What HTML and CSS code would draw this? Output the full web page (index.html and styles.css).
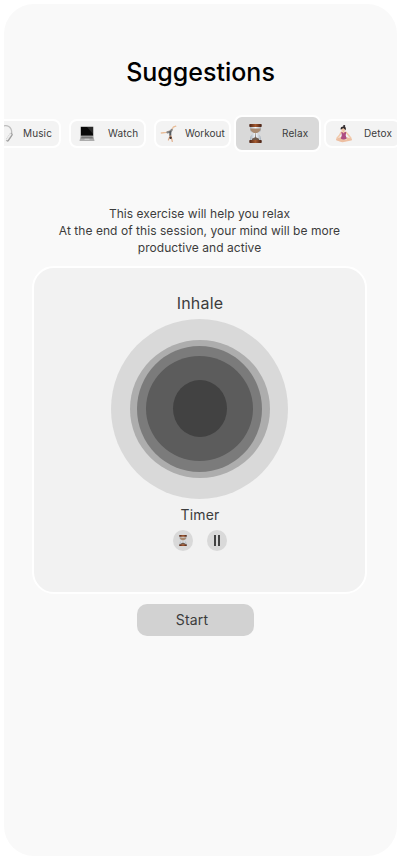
FILE: index.html
```html
<!DOCTYPE html>
<html lang="en">
<head>
<meta charset="utf-8">
<title>Suggestions</title>
<link rel="stylesheet" href="styles.css">
</head>
<body>
<svg width="0" height="0" class="defs">
  <defs>
    <linearGradient id="wood"><stop offset="0" stop-color="#4c2416"/><stop offset=".5" stop-color="#a4592f"/><stop offset="1" stop-color="#452015"/></linearGradient>
    <linearGradient id="glass"><stop offset="0" stop-color="#a9b3bd"/><stop offset=".5" stop-color="#f4f8fc"/><stop offset="1" stop-color="#a9b3bd"/></linearGradient>
    <symbol id="hourglass" viewBox="0 0 13 19">
      <path d="M1 2.500h11v3c0 2.400-2 3-3.600 4 1.600 1 3.600 2.300 3.600 5v2H1v-2c0-2.700 2-4 3.600-5C3 8.500 1 7.900 1 5.500z" fill="url(#glass)"/>
      <path d="M1.300 4.500h10.400c.2 2.500-1.900 3.400-3.600 4.500H4.900C3.200 7.900 1.100 7 1.300 4.500z" fill="#a98a70"/>
      <path d="M3 14.800 6.100 13.300 6.300 9h.4l.2 4.300 3.100 1.500v1.700H3z" fill="#6d5b4e"/>
      <rect x=".3" y="0" width="12.400" height="2.900" rx=".7" fill="url(#wood)"/>
      <rect x=".3" y="16" width="12.400" height="3" rx=".7" fill="url(#wood)"/>
    </symbol>
  </defs>
</svg>
<main class="screen">
  <h1 class="title">Suggestions</h1>
  <nav class="chips">
    <div class="chip chip-music">
      <svg class="icon-music" width="12" height="20" viewBox="0 0 12 20" fill="none">
        <path d="M-5 6C-2 .5 4.500 .2 7 5c1.300 3 .7 6-1.200 9" stroke="#bdbdbd" stroke-width="1.300"/>
        <path d="M7.200 10.500 3.500 16" stroke="#9e9e9e" stroke-width="3.200" stroke-linecap="round"/>
        <path d="M6.500 10.400 3 15.500" stroke="#ececec" stroke-width="2" stroke-linecap="round"/>
      </svg>
      <span>Music</span>
    </div>
    <div class="chip chip-watch">
      <svg width="16" height="16" viewBox="0 0 16 16">
        <rect x="1.500" y=".5" width="13" height="9.800" rx=".6" fill="#8c8c8c"/>
        <rect x="2" y="1" width="12" height="8.500" fill="#080808"/>
        <path d="M8 1h6v7z" fill="#292929"/>
        <path d="M1.500 10.200h13l1 4.800H.5z" fill="#acacac"/>
        <path d="M2.500 10.400h11l.5 2H2z" fill="#777"/>
        <path d="M5.700 12.800h4.600l.3 1.300H5.400z" fill="#c8c8c8"/>
      </svg>
      <span>Watch</span>
    </div>
    <div class="chip chip-workout">
      <svg width="18" height="18" viewBox="0 0 18 18" fill="none" stroke-linecap="round" stroke-linejoin="round">
        <path d="M1.300 8l5.200-.7 3-1.300M12 4.500l1.200-2.300L15.800 1.200" stroke="#e8bd99" stroke-width="1.300"/>
        <path d="M7.500 7.400l3-.9 1.200-1.600" stroke="#858585" stroke-width="2.200"/>
        <path d="M10.300 7v3.500" stroke="#555b60" stroke-width="2"/>
        <path d="M10 11 8.400 15M11 11l1.300 5.500" stroke="#e1ad89" stroke-width="1.200"/>
        <circle cx="10.600" cy="12.800" r="1.200" fill="#3d302e"/>
      </svg>
      <span>Workout</span>
    </div>
    <div class="chip chip-relax">
      <svg width="13" height="19"><use href="#hourglass" width="13" height="19"/></svg>
      <span>Relax</span>
    </div>
    <div class="chip chip-detox">
      <svg width="18" height="18" viewBox="0 0 18 18" fill="none" stroke-linecap="round" stroke-linejoin="round">
        <path d="M6.500 7 4.600 10.200 2 13.300M10.800 7l2.600 3 2.500 3.300" stroke="#f1c9aa" stroke-width="1.500"/>
        <path d="M6.500 12.800 2 14.600l5.500 1.600 8.500-1.600-4.800-1.700-6.200 2.800" stroke="#edbfa2" stroke-width="2"/>
        <path d="M6.300 7h4.900l-.5 3.200.9 3.400c-1.800 1.300-4.400 1.200-5.800 0l1-3.400z" fill="#ad4c82"/>
        <path d="M8.500 4.500v2.800" stroke="#eebf9e" stroke-width="2"/>
        <circle cx="8.300" cy="3.900" r="2.200" fill="#f0c7a7"/>
        <path d="M5.800 4.700C5.100 2.500 6.500 1.500 8.700 1.600c2 0 2.700 1.500 1.900 3.900-.7-1.400-1.700-1.900-2.300-2.500-.6 1-1.800.7-2.500 1.700z" fill="#302a2d"/>
        <circle cx="9.200" cy="1.100" r="1.100" fill="#302a2d"/>
      </svg>
      <span>Detox</span>
    </div>
  </nav>
  <p class="intro">This exercise will help you relax<br>At the end of this session, your mind will be more<br>productive and active</p>
  <section class="card">
    <h2 class="phase">Inhale</h2>
    <svg class="rings" width="177" height="180" viewBox="0 0 177 180">
      <ellipse cx="88.500" cy="90" rx="88.500" ry="90" fill="#d9d9d9"/>
      <ellipse cx="89" cy="90" rx="70" ry="69" fill="#adadad"/>
      <ellipse cx="88.500" cy="90" rx="62.500" ry="63" fill="#7b7b7b"/>
      <ellipse cx="88.500" cy="89.500" rx="53.500" ry="52.500" fill="#5c5c5c"/>
      <ellipse cx="89" cy="89.500" rx="27" ry="28.500" fill="#424242"/>
    </svg>
    <h3 class="timer">Timer</h3>
    <div class="controls">
      <div class="control"><svg width="8" height="11" viewBox="0 0 13 19" preserveAspectRatio="none"><use href="#hourglass" width="13" height="19"/></svg></div>
      <div class="control"><svg width="6" height="11" viewBox="0 0 6 11"><path d="M0 0h2v11H0zM4 0h2v11H4z" fill="#424242"/></svg></div>
    </div>
  </section>
  <button class="start">Start</button>
</main>
</body>
</html>
```
FILE: styles.css
```css
* { box-sizing: border-box; }
body {
  margin: 0;
  padding: 4px;
  background: #fff;
  color: #3c3c3c;
  font-family: Inter, sans-serif;
}
.defs { display: block; }
.screen {
  width: 393px;
  height: 852px;
  border-radius: 30px;
  background: #f9f9f9;
  overflow: hidden;
  display: flex;
  flex-direction: column;
}
.title {
  margin: 53px 0 0;
  height: 30px;
  font-size: 25px;
  line-height: 30px;
  font-weight: 450;
  color: #000;
  text-align: center;
}
.chips {
  display: flex;
  align-items: center;
  height: 37px;
  margin-top: 28px;
}
.chip {
  flex: none;
  display: flex;
  align-items: center;
  height: 29px;
  border: 2px solid #fff;
  border-radius: 8px;
  background: #f3f3f3;
  font-size: 10px;
  line-height: 14px;
  font-weight: 400;
  letter-spacing: .12px;
  white-space: nowrap;
}
.chip svg { flex: none; }
.chip span { margin-bottom: 2px; }
.chip-music { width: 77px; margin-left: -20px; padding-left: 18px; }
.chip-music span { margin-left: 7px; }
.chip-watch { width: 77px; margin-left: 8px; padding-left: 8px; }
.chip-watch span { margin-left: 13px; }
.chip-workout { width: 77px; margin-left: 8px; padding-left: 4px; }
.chip-workout span { margin-left: 7px; letter-spacing: 0; }
.chip-relax { width: 87px; height: 37px; margin-left: 3px; padding-left: 13px; background: #d9d9d9; }
.chip-relax span { margin-left: 20px; }
.chip-detox { width: 77px; margin-left: 3px; padding-left: 9px; }
.chip-detox span { margin-left: 11px; }
.intro {
  margin: 53px 0 0;
  padding-right: 2px;
  font-size: 12px;
  line-height: 17px;
  font-weight: 400;
  letter-spacing: .05px;
  text-align: center;
}
.card {
  width: 335px;
  height: 328px;
  margin: 10px 0 0 28px;
  border: 2px solid #fff;
  border-radius: 22px;
  background: #f2f2f2;
  display: flex;
  flex-direction: column;
  align-items: center;
}
.phase {
  margin: 25px 0 0;
  padding-left: 1px;
  font-size: 16px;
  line-height: 20px;
  font-weight: 400;
  letter-spacing: .2px;
}
.rings { flex: none; margin-top: 6px; }
.timer {
  margin: 6px 0 0;
  padding-left: 1px;
  font-size: 14px;
  line-height: 20px;
  font-weight: 400;
  letter-spacing: .2px;
}
.controls { display: flex; gap: 14px; margin-top: 5px; }
.control {
  width: 20px;
  height: 21px;
  border-radius: 50%;
  background: #d9d9d9;
  display: flex;
  align-items: center;
  justify-content: center;
}
.start {
  width: 117px;
  height: 32px;
  margin: 10px 0 0 133px;
  padding: 0 7px 0 0;
  border: 0;
  border-radius: 10px;
  background: #d2d2d2;
  color: #3c3c3c;
  font: 400 14px/32px Inter, sans-serif;
  letter-spacing: .2px;
  text-align: center;
}
```
